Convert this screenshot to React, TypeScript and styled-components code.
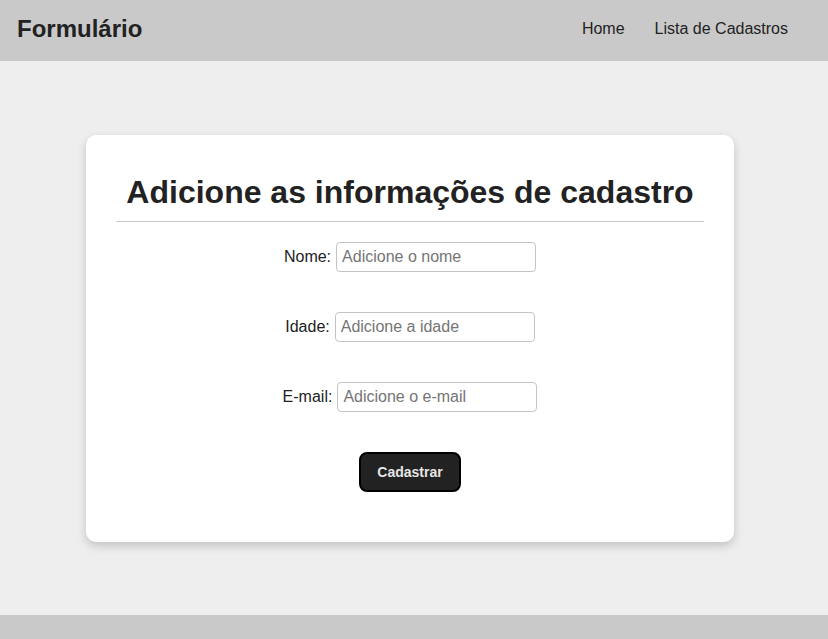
import styled, { createGlobalStyle } from 'styled-components';

const GlobalStyle = createGlobalStyle`
  html, body {
    margin: 0;
    padding: 0;
  }

  body {
    background: #eeeeee;
    font-family: 'Liberation Sans', Arial, sans-serif;
    color: #222222;
  }
`;

const Page = styled.div`
  display: flex;
  flex-direction: column;
  min-height: 639px;
`;

const Header = styled.header`
  height: 61px;
  box-sizing: border-box;
  background: #c9c9c9;
  display: flex;
  align-items: center;
  justify-content: space-between;
  padding: 0 40px 3px 17px;
`;

const Brand = styled.h1`
  margin: 0;
  font-size: 24px;
  font-weight: 700;
  color: #222222;
`;

const Nav = styled.nav`
  display: flex;
  gap: 30px;
`;

const NavLink = styled.a`
  font-size: 16px;
  color: #222222;
  text-decoration: none;
  cursor: pointer;
`;

const Main = styled.main`
  flex: 1;
  display: flex;
  align-items: center;
  justify-content: center;
  padding-right: 8px;
`;

const Card = styled.section`
  width: 648px;
  box-sizing: border-box;
  background: #ffffff;
  border-radius: 10px;
  box-shadow: 0 4px 10px rgba(0, 0, 0, 0.18);
  padding: 39px 30px 50px;
`;

const Title = styled.h2`
  margin: 0;
  height: 48px;
  box-sizing: border-box;
  padding-bottom: 11px;
  border-bottom: 1px solid #cccccc;
  font-size: 32px;
  line-height: 37px;
  font-weight: 700;
  text-align: center;
  color: #222222;
`;

const Form = styled.form`
  display: flex;
  flex-direction: column;
  align-items: center;
  gap: 40px;
  padding-top: 20px;
`;

const Row = styled.div`
  display: flex;
  align-items: center;
  gap: 5px;
`;

const Label = styled.label`
  font-size: 16px;
  color: #222222;
`;

const Input = styled.input`
  width: 200px;
  height: 30px;
  box-sizing: border-box;
  border: 1px solid #c4c4c4;
  border-radius: 4px;
  padding: 0 5px;
  font-family: 'Liberation Sans', Arial, sans-serif;
  font-size: 16px;
  color: #222222;

  &::placeholder {
    color: #757575;
  }
`;

const Button = styled.button`
  height: 40px;
  padding: 0 16px;
  background: #222222;
  color: #e6e6e6;
  border: 2px solid #000000;
  border-radius: 8px;
  font-family: 'Liberation Sans', Arial, sans-serif;
  font-size: 14px;
  font-weight: 700;
  cursor: pointer;
`;

const Footer = styled.footer`
  height: 24px;
  background: #c9c9c9;
`;

const fields = [
  { id: 'nome', label: 'Nome:', placeholder: 'Adicione o nome', type: 'text' },
  { id: 'idade', label: 'Idade:', placeholder: 'Adicione a idade', type: 'text' },
  { id: 'email', label: 'E-mail:', placeholder: 'Adicione o e-mail', type: 'email' },
];

const App = () => (
  <>
    <GlobalStyle />
    <Page>
      <Header>
        <Brand>Formulário</Brand>
        <Nav>
          <NavLink>Home</NavLink>
          <NavLink>Lista de Cadastros</NavLink>
        </Nav>
      </Header>
      <Main>
        <Card>
          <Title>Adicione as informações de cadastro</Title>
          <Form onSubmit={(e) => e.preventDefault()}>
            {fields.map((f) => (
              <Row key={f.id}>
                <Label htmlFor={f.id}>{f.label}</Label>
                <Input id={f.id} type={f.type} placeholder={f.placeholder} />
              </Row>
            ))}
            <Button type="submit">Cadastrar</Button>
          </Form>
        </Card>
      </Main>
      <Footer />
    </Page>
  </>
);

export default App;
